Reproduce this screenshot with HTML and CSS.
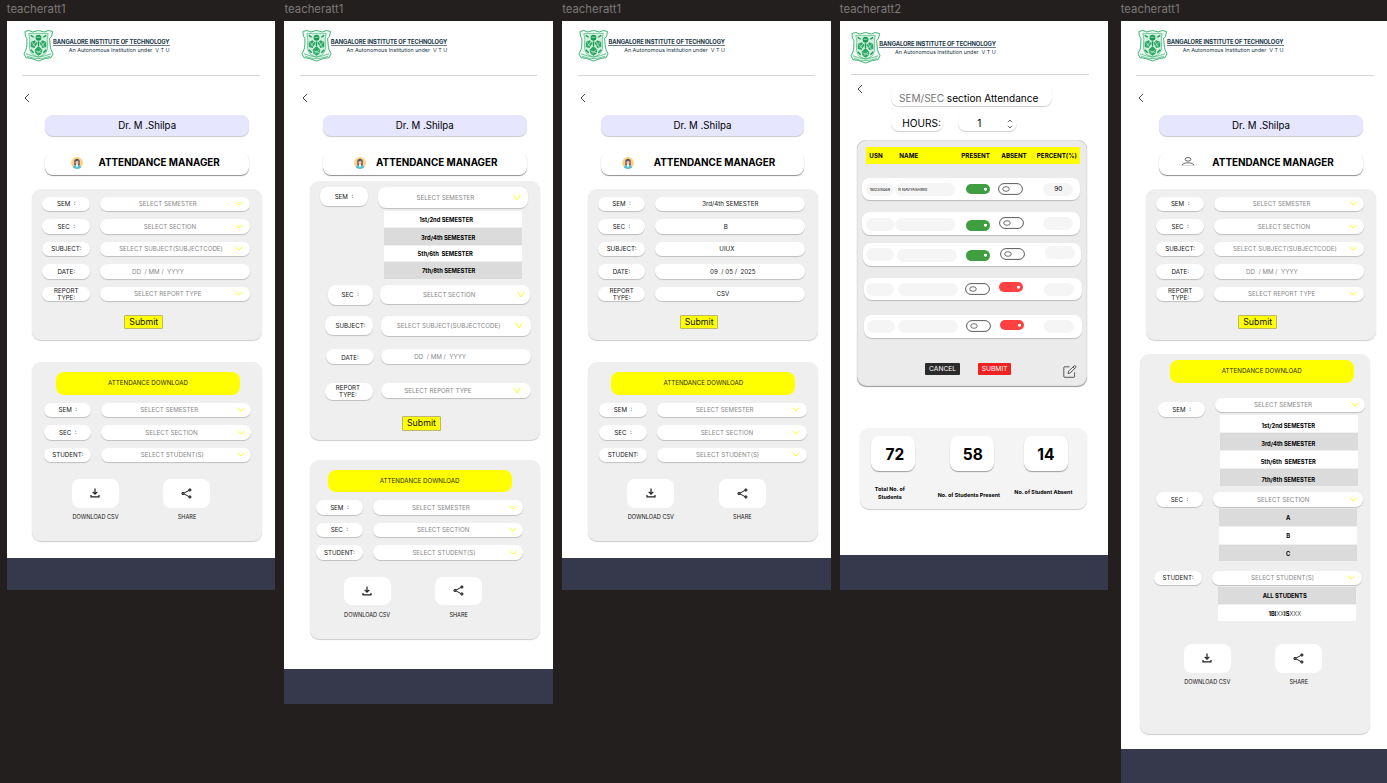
FILE: index.html
```html
<!DOCTYPE html>
<html lang="en">
<head>
<meta charset="utf-8">
<title>Attendance manager screens</title>
<link rel="stylesheet" href="styles.css">
</head>
<body>
<svg class="defs" width="0" height="0">
  <symbol id="crest" viewBox="0 0 32 33">
    <path d="M2 2 L6 1 L10 2.500 L16 1 L22 2.500 L26 1 L30.500 2 L29.500 7 L27.500 9 C28 14 28 18 29 21 L31 25 L29 29 L23 30 L16 32.500 L9 30 L3 29 L1 25 L3 21 C4 18 4 14 4 9 L2.500 7 Z" fill="#f0faf4" stroke="#2aa866" stroke-width=".9"/>
    <path d="M6 4 H26 L25 10 C25.500 17 26 22 22 26 L16 29 L10 26 C6 22 6.500 17 7 10 Z" fill="#d3f0df" stroke="#45b87b" stroke-width=".7"/>
    <circle cx="16" cy="8.500" r="3" fill="#159a50"/>
    <path d="M8 13 L12 11 L15 14 L12 19 L8 18 Z M24 13 L20 11 L17 14 L20 19 L24 18 Z M12 21 L16 17 L20 21 L19 25 L16 27 L13 25 Z" fill="#29a661"/>
    <path d="M8 6 L11 8 M24 6 L21 8 M8 21 L11 24 M24 21 L21 24 M16 12 V17" stroke="#189c53" stroke-width="1.500"/>
    <path d="M3 25 Q16 31 29 25 M4 27.500 Q16 32.500 28 27.500" fill="none" stroke="#45b87b" stroke-width=".8"/>
    <path d="M9 13 L13 18 M10 17 L14 12 M18 12 L22 18 M23 13 L19 17 M13 22 L19 24 M19 21 L14 25 M14 8 H18" stroke="#d9f3e4" stroke-width=".7"/>
  </symbol>
  <symbol id="back" viewBox="0 0 6 10"><path d="M5 1 L1 5 L5 9" fill="none" stroke="#333" stroke-width=".9"/></symbol>
  <symbol id="chev" viewBox="0 0 8 5"><path d="M.6 .8 L4 4 L7.400 .8" fill="none" stroke="#ffff1a" stroke-width="1"/></symbol>
  <symbol id="chevtall" viewBox="0 0 8 7"><path d="M.8 .8 L4 5.900 L7.200 .8" fill="none" stroke="#ffff1a" stroke-width="1"/></symbol>
  <symbol id="avatar" viewBox="0 0 12 12">
    <circle cx="6" cy="6" r="5.900" fill="#fbd27e"/>
    <path d="M3.300 8.500 V4.500 C3.300 .8 8.700 .8 8.700 4.500 V8.500 Z" fill="#5a5068"/>
    <path d="M2 10.500 C2.500 8 4.500 8 6 8 C7.500 8 9.500 8 10 10.500 C8 12.400 4 12.400 2 10.500 Z" fill="#4fc0d3"/>
    <path d="M5 7 H7 V8.500 L6 11 L5 8.500 Z" fill="#fff"/>
    <ellipse cx="6" cy="5.400" rx="1.600" ry="2.100" fill="#f3c3a5"/>
    <path d="M4.300 4.800 C5 4.500 6 4 6.300 3.300 C6.700 4 7.200 4.500 7.700 4.700 V3.400 L6 2.500 L4.300 3.300 Z" fill="#5a5068"/>
  </symbol>
  <symbol id="person" viewBox="0 0 14 9"><ellipse cx="7" cy="2.300" rx="2.900" ry="1.800" fill="none" stroke="#444" stroke-width=".8"/><path d="M1 8.500 C1.200 4.900 12.800 4.900 13 8.500" fill="none" stroke="#444" stroke-width=".8"/><path d="M1 8.400 H13" stroke="#aaa" stroke-width=".5"/></symbol>
  <symbol id="download" viewBox="0 0 10 10"><path d="M5 .5 V6 M2.700 3.800 L5 6.100 L7.300 3.800 M1 7 V8.900 H9 V7" fill="none" stroke="#1f1f24" stroke-width="1.200"/></symbol>
  <symbol id="share" viewBox="0 0 11 11"><path d="M8.800 2 L2.200 5.500 L8.800 9" fill="none" stroke="#222" stroke-width="1"/><g fill="#777" stroke="#1c1c20" stroke-width=".9"><circle cx="8.900" cy="2" r="1.150"/><circle cx="2" cy="5.500" r="1.150"/><circle cx="8.900" cy="9" r="1.150"/></g></symbol>
  <symbol id="updown" viewBox="0 0 6 10"><path d="M1 3.300 L3 1 L5 3.300 M1 6.700 L3 9 L5 6.700" fill="none" stroke="#444" stroke-width=".8"/></symbol>
  <symbol id="edit" viewBox="0 0 14 13"><path d="M6.500 1.800 H1.600 Q.8 1.800 .8 2.600 V11.500 Q.8 12.300 1.600 12.300 H10.800 Q11.600 12.300 11.600 11.500 V7.300 M5 8.600 L5.600 6.200 L11 1 Q11.700 .4 12.500 1 Q13.400 1.800 12.600 2.600 L7.200 8 Z M10 2 L11.700 3.600" fill="none" stroke="#333" stroke-width=".8"/></symbol>
  <symbol id="off" viewBox="0 0 25 12"><rect x=".6" y=".6" width="23.800" height="10.800" rx="5.400" fill="#fff" stroke="#4a4a4a" stroke-width=".9"/><ellipse cx="8" cy="6" rx="3.300" ry="2.300" fill="none" stroke="#4a4a4a" stroke-width=".8"/></symbol>
</svg>

<main class="canvas">

<section class="screen">
  <h2 class="frame-name">teacheratt1</h2>
  <div class="frame">
    <header class="brand"><svg class="crest"><use href="#crest"/></svg><div class="brand-text"><b>BANGALORE INSTITUTE OF TECHNOLOGY</b><small>An Autonomous Institution under&nbsp; V T U</small></div></header>
    <svg class="back"><use href="#back"/></svg>
    <div class="teacher">Dr. M .Shilpa</div>
    <div class="manager"><svg class="avatar"><use href="#avatar"/></svg><span>ATTENDANCE MANAGER</span></div>
    <div class="card form">
      <div class="row"><div class="label">SEM  :</div><div class="field"><span>SELECT SEMESTER</span><svg class="chev"><use href="#chev"/></svg></div></div>
      <div class="row"><div class="label">SEC  :</div><div class="field section"><span>SELECT SECTION</span><svg class="chev"><use href="#chev"/></svg></div></div>
      <div class="row"><div class="label">SUBJECT:</div><div class="field subject"><span>SELECT SUBJECT(SUBJECTCODE)</span><svg class="chev"><use href="#chev"/></svg></div></div>
      <div class="row"><div class="label">DATE:</div><div class="field date"><span>DD  / MM /  YYYY</span></div></div>
      <div class="row"><div class="label">REPORT
TYPE:</div><div class="field"><span>SELECT REPORT TYPE</span><svg class="chev"><use href="#chev"/></svg></div></div>
      <button class="submit">Submit</button>
    </div>
    <div class="card export">
      <div class="export-title">ATTENDANCE DOWNLOAD</div>
      <div class="row"><div class="label">SEM  :</div><div class="field"><span>SELECT SEMESTER</span><svg class="chev"><use href="#chev"/></svg></div></div>
      <div class="row"><div class="label">SEC  :</div><div class="field section"><span>SELECT SECTION</span><svg class="chev"><use href="#chev"/></svg></div></div>
      <div class="row"><div class="label">STUDENT:</div><div class="field student"><span>SELECT STUDENT(S)</span><svg class="chev"><use href="#chev"/></svg></div></div>
      <div class="actions"><div class="action"><div class="tile"><svg class="dl"><use href="#download"/></svg></div>DOWNLOAD CSV</div><div class="action"><div class="tile"><svg class="sh"><use href="#share"/></svg></div>SHARE</div></div>
    </div>
  </div>
</section>

<section class="screen open-sem">
  <h2 class="frame-name">teacheratt1</h2>
  <div class="frame">
    <header class="brand"><svg class="crest"><use href="#crest"/></svg><div class="brand-text"><b>BANGALORE INSTITUTE OF TECHNOLOGY</b><small>An Autonomous Institution under&nbsp; V T U</small></div></header>
    <svg class="back"><use href="#back"/></svg>
    <div class="teacher">Dr. M .Shilpa</div>
    <div class="manager"><svg class="avatar"><use href="#avatar"/></svg><span>ATTENDANCE MANAGER</span></div>
    <div class="card form">
      <div class="row r-sem"><div class="label">SEM  :</div><div class="field"><span>SELECT SEMESTER</span><svg class="chev tall"><use href="#chevtall"/></svg></div></div>
      <ul class="options">
        <li>1st/2nd SEMESTER</li><li class="alt">3rd/4th SEMESTER</li><li>5th/6th  SEMESTER</li><li class="alt">7th/8th SEMESTER</li>
      </ul>
      <div class="row r-sec"><div class="label">SEC  :</div><div class="field section"><span>SELECT SECTION</span><svg class="chev tall"><use href="#chevtall"/></svg></div></div>
      <div class="row r-subject"><div class="label">SUBJECT:</div><div class="field"><span>SELECT SUBJECT(SUBJECTCODE)</span><svg class="chev tall"><use href="#chevtall"/></svg></div></div>
      <div class="row r-date"><div class="label">DATE:</div><div class="field date"><span>DD  / MM /  YYYY</span></div></div>
      <div class="row r-report"><div class="label">REPORT
TYPE:</div><div class="field"><span>SELECT REPORT TYPE</span><svg class="chev tall"><use href="#chevtall"/></svg></div></div>
      <button class="submit">Submit</button>
    </div>
    <div class="card export">
      <div class="export-title">ATTENDANCE DOWNLOAD</div>
      <div class="row"><div class="label">SEM  :</div><div class="field"><span>SELECT SEMESTER</span><svg class="chev"><use href="#chev"/></svg></div></div>
      <div class="row"><div class="label">SEC  :</div><div class="field section"><span>SELECT SECTION</span><svg class="chev"><use href="#chev"/></svg></div></div>
      <div class="row"><div class="label">STUDENT:</div><div class="field student"><span>SELECT STUDENT(S)</span><svg class="chev"><use href="#chev"/></svg></div></div>
      <div class="actions"><div class="action"><div class="tile"><svg class="dl"><use href="#download"/></svg></div>DOWNLOAD CSV</div><div class="action"><div class="tile"><svg class="sh"><use href="#share"/></svg></div>SHARE</div></div>
    </div>
  </div>
</section>

<section class="screen filled">
  <h2 class="frame-name">teacheratt1</h2>
  <div class="frame">
    <header class="brand"><svg class="crest"><use href="#crest"/></svg><div class="brand-text"><b>BANGALORE INSTITUTE OF TECHNOLOGY</b><small>An Autonomous Institution under&nbsp; V T U</small></div></header>
    <svg class="back"><use href="#back"/></svg>
    <div class="teacher">Dr. M .Shilpa</div>
    <div class="manager"><svg class="avatar"><use href="#avatar"/></svg><span>ATTENDANCE MANAGER</span></div>
    <div class="card form">
      <div class="row"><div class="label">SEM  :</div><div class="field v-sem"><span>3rd/4th SEMESTER</span></div></div>
      <div class="row"><div class="label">SEC  :</div><div class="field v-sec"><span>B</span></div></div>
      <div class="row"><div class="label">SUBJECT:</div><div class="field v-subject"><span>UIUX</span></div></div>
      <div class="row"><div class="label">DATE:</div><div class="field v-date"><span>09  / 05 /  2025</span></div></div>
      <div class="row"><div class="label">REPORT
TYPE:</div><div class="field v-report"><span>CSV</span></div></div>
      <button class="submit">Submit</button>
    </div>
    <div class="card export">
      <div class="export-title">ATTENDANCE DOWNLOAD</div>
      <div class="row"><div class="label">SEM  :</div><div class="field"><span>SELECT SEMESTER</span><svg class="chev"><use href="#chev"/></svg></div></div>
      <div class="row"><div class="label">SEC  :</div><div class="field section"><span>SELECT SECTION</span><svg class="chev"><use href="#chev"/></svg></div></div>
      <div class="row"><div class="label">STUDENT:</div><div class="field student"><span>SELECT STUDENT(S)</span><svg class="chev"><use href="#chev"/></svg></div></div>
      <div class="actions"><div class="action"><div class="tile"><svg class="dl"><use href="#download"/></svg></div>DOWNLOAD CSV</div><div class="action"><div class="tile"><svg class="sh"><use href="#share"/></svg></div>SHARE</div></div>
    </div>
  </div>
</section>

<section class="screen register">
  <h2 class="frame-name">teacheratt2</h2>
  <div class="frame">
    <header class="brand"><svg class="crest"><use href="#crest"/></svg><div class="brand-text"><b>BANGALORE INSTITUTE OF TECHNOLOGY</b><small>An Autonomous Institution under&nbsp; V T U</small></div></header>
    <div class="heading"><svg class="back"><use href="#back"/></svg><div class="class-name"><span class="muted">SEM/SEC</span> section Attendance</div></div>
    <div class="hours"><div class="hours-label">HOURS:</div><div class="hours-value"><span>1</span><svg class="updown"><use href="#updown"/></svg></div></div>
    <div class="card roll">
      <div class="roll-head"><span>USN</span><span>NAME</span><span>PRESENT</span><span>ABSENT</span><span>PERCENT(%)</span></div>
      <div class="entry e1"><div class="cell usn">1BI23IS069</div><div class="cell name">R NAVYASHREE</div><i class="on"></i><svg class="off"><use href="#off"/></svg><div class="cell pct">90</div></div>
      <div class="entry e2"><div class="cell usn"></div><div class="cell name"></div><i class="on"></i><svg class="off"><use href="#off"/></svg><div class="cell pct"></div></div>
      <div class="entry e3"><div class="cell usn"></div><div class="cell name"></div><i class="on"></i><svg class="off"><use href="#off"/></svg><div class="cell pct"></div></div>
      <div class="entry e4"><div class="cell usn"></div><div class="cell name"></div><svg class="off"><use href="#off"/></svg><i class="on red"></i><div class="cell pct"></div></div>
      <div class="entry e5"><div class="cell usn"></div><div class="cell name"></div><svg class="off"><use href="#off"/></svg><i class="on red"></i><div class="cell pct"></div></div>
      <div class="roll-actions"><button class="cancel">CANCEL</button><button class="send">SUBMIT</button><svg class="edit"><use href="#edit"/></svg></div>
    </div>
    <div class="card stats">
      <div class="stat total"><b>72</b><span>Total No. of
Students</span></div>
      <div class="stat present"><b>58</b><span>No. of Students Present</span></div>
      <div class="stat absent"><b>14</b><span>No. of Student Absent</span></div>
    </div>
  </div>
</section>

<section class="screen open-export">
  <h2 class="frame-name">teacheratt1</h2>
  <div class="frame">
    <header class="brand"><svg class="crest"><use href="#crest"/></svg><div class="brand-text"><b>BANGALORE INSTITUTE OF TECHNOLOGY</b><small>An Autonomous Institution under&nbsp; V T U</small></div></header>
    <svg class="back"><use href="#back"/></svg>
    <div class="teacher">Dr. M .Shilpa</div>
    <div class="manager"><svg class="person"><use href="#person"/></svg><span>ATTENDANCE MANAGER</span></div>
    <div class="card form">
      <div class="row"><div class="label">SEM  :</div><div class="field"><span>SELECT SEMESTER</span><svg class="chev"><use href="#chev"/></svg></div></div>
      <div class="row"><div class="label">SEC  :</div><div class="field section"><span>SELECT SECTION</span><svg class="chev"><use href="#chev"/></svg></div></div>
      <div class="row"><div class="label">SUBJECT:</div><div class="field subject"><span>SELECT SUBJECT(SUBJECTCODE)</span><svg class="chev"><use href="#chev"/></svg></div></div>
      <div class="row"><div class="label">DATE:</div><div class="field date"><span>DD  / MM /  YYYY</span></div></div>
      <div class="row"><div class="label">REPORT
TYPE:</div><div class="field"><span>SELECT REPORT TYPE</span><svg class="chev"><use href="#chev"/></svg></div></div>
      <button class="submit">Submit</button>
    </div>
    <div class="card export">
      <div class="export-title">ATTENDANCE DOWNLOAD</div>
      <div class="row x-sem"><div class="label">SEM  :</div><div class="field"><span>SELECT SEMESTER</span><svg class="chev"><use href="#chev"/></svg></div></div>
      <ul class="options o-sem">
        <li>1st/2nd SEMESTER</li><li class="alt">3rd/4th SEMESTER</li><li>5th/6th  SEMESTER</li><li class="alt">7th/8th SEMESTER</li>
      </ul>
      <div class="row x-sec"><div class="label">SEC  :</div><div class="field section"><span>SELECT SECTION</span><svg class="chev"><use href="#chev"/></svg></div></div>
      <ul class="options o-sec"><li class="alt">A</li><li>B</li><li class="alt">C</li></ul>
      <div class="row x-student"><div class="label">STUDENT:</div><div class="field student"><span>SELECT STUDENT(S)</span><svg class="chev"><use href="#chev"/></svg></div></div>
      <ul class="options o-student"><li class="alt">ALL STUDENTS</li><li>1BI<span class="thin">XX</span>IS<span class="thin">XXX</span></li></ul>
      <div class="actions"><div class="action"><div class="tile"><svg class="dl"><use href="#download"/></svg></div>DOWNLOAD CSV</div><div class="action"><div class="tile"><svg class="sh"><use href="#share"/></svg></div>SHARE</div></div>
    </div>
  </div>
</section>

</main>
</body>
</html>
```

FILE: styles.css
```css
* { box-sizing: border-box; margin: 0; padding: 0; }
html, body { width: 1387px; height: 783px; overflow: hidden; }
body { background: #231f1e; font-family: Inter, "Liberation Sans", sans-serif; color: #000; }
.defs { display: block; height: 0; }
svg { display: block; flex: none; }

/* Canvas and frames */
.canvas { display: flex; align-items: flex-start; gap: 9.200px; width: 1400px; padding-left: 6.800px; }
.screen { flex: none; width: 268.500px; }
.screen.open-export { margin-left: 3.200px; }
.frame-name { height: 20.600px; font-size: 11.350px; font-weight: 400; line-height: 18px; color: #7c7978; }
.frame { display: flow-root; height: 569.500px; background: #fff; border-bottom: 32px solid #36384c; }
.open-sem .frame { height: 683.500px; border-bottom-width: 35px; }
.register .frame { border-bottom-width: 35px; }
.open-export .frame { height: 780px; border-bottom-width: 52px; }

/* Institution header */
.brand { display: flex; width: 237.500px; height: 55px; margin-left: 15.500px; border-bottom: 1px solid #d6d6d6; }
.crest { width: 31px; height: 33px; margin: 8px 0 0 .8px; }
.brand-text { width: 116.500px; margin: 16.400px 0 0 -1px; white-space: nowrap; color: #22384a; }
.brand-text b { display: block; height: 9px; border-bottom: 1px solid #71808c; font-size: 5.800px; line-height: 9px; letter-spacing: -.1px; }
.brand-text small { display: block; font-size: 5.400px; line-height: 8.500px; text-align: right; }
.back { width: 6px; height: 10px; margin: 17.400px 0 0 17.500px; }

.teacher, .manager { width: 203.500px; margin-left: 38.600px; border-radius: 8px; display: flex; align-items: center; }
.teacher { justify-content: center; height: 21px; margin-top: 12.200px; background: #e6e6ff; font-size: 9.700px; box-shadow: 0 1px 1px rgba(0,0,0,.22); }
.manager { height: 23.500px; margin-top: 15.500px; background: #fff; box-shadow: 0 1px 1px rgba(0,0,0,.45); font-weight: 700; font-size: 9.900px; white-space: nowrap; }
.manager span { width: 122px; margin: -3px 28.500px 0 auto; }
.avatar { width: 12px; height: 12px; margin: -1px 0 0 25.500px; }
.open-sem .avatar { margin-left: 31px; }
.filled .avatar { margin-left: 21.500px; }
.person { width: 14px; height: 9px; margin: -4px 0 0 22px; }

/* Cards */
.card { display: flow-root; width: 230px; margin-left: 25.700px; background: #efefef; border-radius: 9px; box-shadow: 0 1px 1px rgba(0,0,0,.2); }
.form { height: 151px; margin-top: 14px; padding: 7.500px 0 0 10px; }
.export { height: 179px; margin-top: 22px; padding: 10px 0 0 11.500px; }
.row { display: flex; align-items: flex-start; gap: 10px; height: 14.500px; margin-bottom: 8px; }
.label, .field { height: 14.500px; display: flex; align-items: center; border-radius: 9px; background: #fff; box-shadow: 0 1px 1px rgba(0,0,0,.2); white-space: pre; font-size: 6.200px; line-height: 7.300px; }
.label { width: 47.500px; justify-content: center; text-align: center; color: #151515; }
.field { width: 150px; color: #888; }
.field span { flex: 1; text-align: center; }
.chev { width: 8px; height: 5px; margin-right: 6.500px; }
.chev.tall { height: 7px; }
.section { padding-left: 4.500px; }
.subject { padding-left: 6.500px; }
.student { padding-left: 6px; }
.date { padding-right: 34px; }
.submit { display: block; width: 38.500px; height: 14px; margin: 14px 0 0 82px; background: #ff0; border: 1px solid #b9b96a; border-radius: 1px; font: 8.800px Inter, sans-serif; line-height: 12px; color: #111; }

.export-title { width: 184px; height: 22.500px; margin: 0 0 8px 12px; border-radius: 8px; background: #ff0; font-size: 6.200px; line-height: 22px; text-align: center; color: #2c2c08; }
.actions { display: flex; gap: 44.500px; margin: 17px 0 0 28px; }
.action { width: 47px; font-size: 5.600px; line-height: 8px; text-align: center; white-space: nowrap; color: #111; }
.tile { display: flex; align-items: center; justify-content: center; height: 28.500px; margin-bottom: 5.500px; border-radius: 8px; background: #fff; }
.dl { width: 10px; height: 10px; }
.sh { width: 11px; height: 11px; }

/* Option lists */
.options { list-style: none; width: 138px; font-size: 5.800px; font-weight: 700; }
.options li { height: 17.500px; line-height: 17px; text-align: center; background: #fff; border-bottom: 1px solid #efefef; white-space: pre; }
.options .alt { background: #dbdbdb; }
.thin { font-weight: 300; }

/* Filled-in form */
.filled .form .field { color: #151515; }
.v-sec { padding-right: 9px; }
.v-subject { padding-right: 7px; }
.v-date { padding-left: 5px; }
.v-report { padding-right: 15px; }

/* Semester list open */
.open-sem .form { height: 259px; margin-top: 6px; padding-top: 5.500px; }
.open-sem .form .label, .open-sem .form .field { border-radius: 8px; }
.r-sem { height: 22px; margin-bottom: 2px; }
.r-sem .label { height: 19px; }
.r-sem .field { height: 21.500px; }
.open-sem .options { height: 69px; margin: 0 0 5px 64px; }
.open-sem .options li { height: 17.500px; padding-right: 14px; }
.open-sem .options li:nth-child(2) { height: 18px; line-height: 20px; padding-right: 10px; }
.open-sem .options li:nth-child(3) { height: 16px; line-height: 15px; padding-right: 16px; }
.open-sem .options li:nth-child(4) { height: 17.500px; padding-right: 9px; }
.r-sec { height: 20px; margin: 0 0 11px 7.500px; gap: 7px; }
.r-sec .label { width: 45px; height: 20px; }
.r-sec .field { height: 18.500px; margin-top: .5px; padding-left: 2px; }
.r-sec .chev { margin-right: 5px; }
.r-subject { height: 20px; margin: 0 0 13px 5px; gap: 8px; }
.r-subject .label { height: 19.500px; padding-left: 3px; }
.r-subject .field { height: 19.500px; margin-top: .5px; padding-left: 2px; }
.r-subject .chev { margin-right: 8px; }
.r-date { height: 15.500px; margin: 0 0 18.500px 6px; gap: 7px; }
.r-date .label { height: 15.500px; padding-top: 2px; }
.r-date .field { height: 15.500px; padding-right: 31px; }
.r-report { height: 17px; margin: 0 0 16px 5px; gap: 8px; }
.r-report .label { height: 17px; padding-right: 2px; }
.r-report .field { height: 15.500px; }
.r-report .field span { padding-right: 18px; }
.r-report .chev { margin-right: 9.500px; }
.open-sem .submit { height: 15px; margin-top: 0; }
.open-sem .export { margin-top: 19.500px; padding-left: 5.500px; }

/* Register */
.register .brand { margin-left: 11.500px; height: 54px; }
.register .crest { margin: 10px 0 0 -1px; }
.register .brand-text { margin: 18.400px 0 0 -2px; }
.heading { display: flex; margin-top: 9.400px; }
.heading .back { margin: 0 0 0 16.800px; }
.class-name { width: 161px; height: 22px; margin-left: 28px; border-radius: 8px; box-shadow: 0 1px 1px rgba(0,0,0,.2); font-size: 10.050px; line-height: 28px; text-align: center; white-space: nowrap; padding-right: 5px; }
.muted { color: #777; }
.hours { display: flex; gap: 15px; margin: 8px 0 0 51px; font-size: 10.100px; }
.hours-label, .hours-value { height: 17px; line-height: 18.500px; border-radius: 8px; box-shadow: 0 1px 1px rgba(0,0,0,.2); }
.hours-label { width: 52.500px; padding-left: 11.500px; }
.hours-value { display: flex; align-items: center; width: 59px; padding-left: 19px; }
.hours-value span { padding-top: 1px; }
.updown { width: 6px; height: 10px; margin: 3px 4.500px 0 auto; }
.roll { width: 230px; height: 246px; margin: 9.300px 0 0 17.500px; background: #ebebeb; box-shadow: inset 0 0 1px 0 #777, 0 1px 1px rgba(0,0,0,.4); }
.roll-head { display: grid; grid-template-columns: 30px 62px 40px 35.500px auto; width: 214px; height: 16.500px; margin: 7px 0 13.800px 8.500px; padding-left: 3.500px; background: #ff0; font-size: 6.200px; font-weight: 700; line-height: 17px; white-space: nowrap; }
.entry { display: grid; grid-template-columns: 29px 71px 33px 44.500px 30px; align-items: start; width: 218px; height: 22.500px; margin-left: 4.500px; padding: 5px 0 0 4px; border-radius: 8px; background: #fff; box-shadow: 0 1px 1px rgba(0,0,0,.2); }
.cell { height: 13px; border-radius: 6.500px; background: #f5f5f5; line-height: 13px; white-space: nowrap; text-align: center; }
.usn { width: 28px; font-size: 3.800px; }
.name { width: 60px; padding-left: 3.500px; font-size: 3.900px; text-align: left; }
.pct { width: 30px; font-size: 6.500px; line-height: 13.500px; }
.on { display: block; width: 24px; height: 10.500px; margin-top: 1px; border-radius: 5.500px; background: radial-gradient(circle at 19.500px 5.200px, #fff 1.200px, transparent 1.800px), #3f9e40; }
.on.red { background: radial-gradient(circle at 19.500px 5.200px, #fff 1.200px, transparent 1.800px), #ff4141; }
.off { width: 25px; height: 12px; margin-left: -1px; }
.e2 { margin-top: 12px; padding-top: 6px; }
.e2 .on { margin-top: 2px; }
.e2 .off { margin-left: 0; margin-top: -1px; }
.e2 .pct { margin-top: -1.500px; }
.e3 { margin: 8.500px 0 0 5.500px; padding: 4.500px 0 0 3.500px; }
.e3 .name { margin: 1px 0 0 1.500px; }
.e3 .on { margin-top: 2.500px; }
.e3 .off { margin-left: .5px; }
.e3 .pct { margin: -1.500px 0 0 1.500px; }
.e4 { margin: 12px 0 0 6.500px; padding: 5px 0 0 2.500px; }
.e4 .name, .e5 .name { margin-left: 2.500px; }
.e4 .off { margin-top: .5px; margin-left: -1px; }
.e4 .on { margin-top: -1px; }
.e5 { margin: 15px 0 0 6.500px; padding: 5px 0 0 3px; }
.e5 .off { margin-left: -.5px; }
.e5 .on { margin-top: -.5px; }
.roll-actions { display: flex; margin: 25px 0 0 67.500px; }
.roll-actions button { height: 12.500px; border: 0; border-radius: 1px; color: #fff; font: 6.700px Inter, sans-serif; line-height: 12.500px; text-align: center; }
.roll-actions .cancel { width: 35.500px; background: #2b2b2b; }
.roll-actions .send { width: 32.500px; margin-left: 18px; background: #ee2222; }
.edit { width: 14px; height: 13px; margin: 2px 0 0 51.800px; }
.stats { display: flex; align-items: flex-start; width: 227px; height: 81px; margin: 41.700px 0 0 20px; background: #f4f4f4; padding-top: 8.500px; }
.stat { display: flex; flex-direction: column; align-items: center; width: 44px; white-space: pre; text-align: center; }
.stat b { width: 44px; height: 34.500px; border-radius: 8px; background: #fff; box-shadow: 0 1px 1px rgba(0,0,0,.35); font-size: 15.500px; line-height: 37.500px; }
.stat span { font-size: 5.400px; font-weight: 700; line-height: 8px; }
.total { margin-left: 11.500px; }
.total b { padding-left: 3px; }
.total span { margin: 14.500px 7px 0 0; }
.present { margin-left: 35px; }
.present b { padding-left: 1px; }
.present span { margin: 20px 7px 0 0; }
.absent { margin-left: 29.500px; }
.absent span { margin: 17px 5px 0 0; }

/* Download lists open */
.open-export .export { height: 380px; margin: 14px 0 0 19px; padding: 6px 0 0 0; }
.open-export .export-title { margin: 0 0 15px 30px; }
.x-sem { height: 15px; margin: 0 0 2.500px 18px; }
.x-sem .label { margin-top: 4.500px; }
.o-sem { margin: 0 0 5px 80.500px; }
.o-sem li { height: 18px; line-height: 21px; padding-right: 2px; }
.x-sec { margin: 0 0 2.500px 16px; }
.o-sec { margin: 0 0 8.500px 79.500px; }
.o-sec li { height: 17.700px; line-height: 18px; }
.x-student { margin: 0 0 2px 14.500px; }
.o-student { margin: 0 0 22px 78px; }
.o-student li { padding-right: 4px; line-height: 18px; }
.open-export .actions { margin-left: 44px; }
```
